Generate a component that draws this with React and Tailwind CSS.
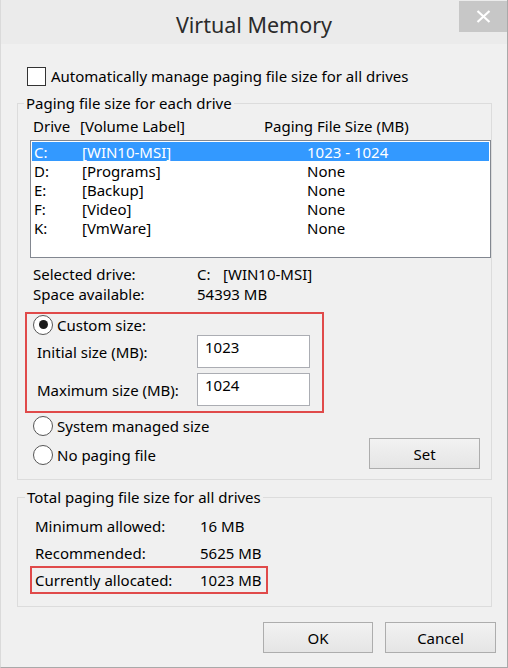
import { useState } from "react";

const drives = [
  { letter: "C:", label: "[WIN10-MSI]", size: "1023 - 1024" },
  { letter: "D:", label: "[Programs]", size: "None" },
  { letter: "E:", label: "[Backup]", size: "None" },
  { letter: "F:", label: "[Video]", size: "None" },
  { letter: "K:", label: "[VmWare]", size: "None" },
];

const Radio = ({ checked, onClick, children }) => (
  <div className="flex items-center h-[22px] cursor-default" onClick={onClick}>
    <span className="w-[20px] h-[20px] rounded-full border border-[#555] bg-white flex items-center justify-center">
      {checked && <span className="w-[9px] h-[9px] rounded-full bg-[#1a1a1a]" />}
    </span>
    <span className="ml-[4px]">{children}</span>
  </div>
);

const Button = ({ className = "", children }) => (
  <button className={`h-[31px] border border-[#adadad] bg-gradient-to-b from-[#f2f2f2] to-[#e5e5e5] text-black ${className}`}>
    {children}
  </button>
);

export default function App() {
  const [selected, setSelected] = useState(0);
  const [mode, setMode] = useState("custom");
  const [initial, setInitial] = useState("1023");
  const [maximum, setMaximum] = useState("1024");

  return (
    <div className="w-[508px] h-[668px] bg-[#f0f0f0] border-r border-b border-l border-r-[#a9a9a9] border-b-[#a9a9a9] border-l-[#dadada] flex flex-col text-black text-[15px] leading-[20px] font-['Noto_Sans',sans-serif] select-none">
      {/* title bar */}
      <div className="relative h-[44px] bg-[#ebebeb] flex items-center justify-center pt-[5px]">
        <span className="text-[21.5px] leading-[28px] text-[#2b2b2b]">Virtual Memory</span>
        <div className="absolute right-0 top-[1px] w-[48px] h-[31px] bg-[#c7c7c7] flex items-center justify-center">
          <svg width="15" height="13" viewBox="0 0 15 13">
            <path d="M1.5 1 L13.5 12 M13.5 1 L1.5 12" stroke="white" strokeWidth="2.2" />
          </svg>
        </div>
      </div>

      {/* auto manage */}
      <div className="flex items-center mt-[22px] ml-[26px] h-[20px]">
        <span className="w-[19px] h-[19px] border border-[#333] bg-white" />
        <span className="ml-[5px]">Automatically manage paging file size for all drives</span>
      </div>

      {/* paging file size for each drive */}
      <fieldset className="ml-[16px] mt-[7px] w-[475px] border border-[#dcdcdc] pb-[10px]">
        <legend className="ml-[6px] px-[2px] leading-[20px]">Paging file size for each drive</legend>
        <div className="flex h-[19px] mt-[3px] pl-[15px] items-center">
          <span className="w-[47px]">Drive</span>
          <span className="w-[184px]">[Volume Label]</span>
          <span>Paging File Size (MB)</span>
        </div>
        <div className="ml-[12px] mt-[5px] w-[461px] h-[118px] border border-[#828790] bg-white p-[1px]">
          {drives.map((d, i) => (
            <div
              key={d.letter}
              onClick={() => setSelected(i)}
              className={`flex h-[19px] items-center pl-[2px] ${selected === i ? "bg-[#3399ff] text-white" : ""}`}
            >
              <span className="w-[48px]">{d.letter}</span>
              <span className="w-[225px]">{d.label}</span>
              <span>{d.size}</span>
            </div>
          ))}
        </div>

        <div className="mt-[6px] pl-[15px]">
          <div className="flex h-[20px] items-center">
            <span className="w-[164px]">Selected drive:</span>
            <span className="w-[26px]">{drives[selected].letter}</span>
            <span>{drives[selected].label}</span>
          </div>
          <div className="flex h-[20px] items-center">
            <span className="w-[164px]">Space available:</span>
            <span>54393 MB</span>
          </div>
        </div>

        {/* custom size (highlighted) */}
        <div className="ml-[7px] mt-[8px] w-[299px] h-[101px] border-2 border-[#e04a4a]">
          <div className="ml-[6px] h-[21px] flex items-center">
            <Radio checked={mode === "custom"} onClick={() => setMode("custom")}>Custom size:</Radio>
          </div>
          <div className="flex items-center h-[33px] pl-[10px]">
            <span className="w-[160px]">Initial size (MB):</span>
            <input
              value={initial}
              onChange={(e) => setInitial(e.target.value)}
              className="w-[113px] h-[33px] border border-[#abadb3] bg-white pl-[7px] pb-[9px] outline-none"
            />
          </div>
          <div className="flex items-center h-[33px] mt-[5px] pl-[10px]">
            <span className="w-[160px]">Maximum size (MB):</span>
            <input
              value={maximum}
              onChange={(e) => setMaximum(e.target.value)}
              className="w-[113px] h-[33px] border border-[#abadb3] bg-white pl-[7px] pb-[9px] outline-none"
            />
          </div>
        </div>

        <div className="flex mt-[2px]">
          <div className="ml-[15px] flex flex-col gap-[7px]">
            <Radio checked={mode === "system"} onClick={() => setMode("system")}>System managed size</Radio>
            <Radio checked={mode === "none"} onClick={() => setMode("none")}>No paging file</Radio>
          </div>
          <Button className="ml-auto mr-[11px] mt-[23px] w-[111px] h-[30px]">Set</Button>
        </div>
      </fieldset>

      {/* totals */}
      <fieldset className="ml-[16px] mt-[7px] w-[475px] border border-[#dcdcdc] pb-[12px]">
        <legend className="ml-[7px] px-[2px] leading-[20px]">Total paging file size for all drives</legend>
        <div className="mt-[6px] pl-[17px]">
          <div className="flex h-[26px] items-center">
            <span className="w-[165px]">Minimum allowed:</span>
            <span>16 MB</span>
          </div>
          <div className="flex h-[27px] items-center">
            <span className="w-[165px]">Recommended:</span>
            <span>5625 MB</span>
          </div>
        </div>
        <div className="ml-[12px] w-[238px] h-[28px] border-2 border-[#e04a4a] flex items-center pl-[3px]">
          <span className="w-[165px]">Currently allocated:</span>
          <span>1023 MB</span>
        </div>
      </fieldset>

      <div className="flex justify-end gap-[12px] mt-[15px] pr-[11px]">
        <Button className="w-[110px]">OK</Button>
        <Button className="w-[111px]">Cancel</Button>
      </div>
    </div>
  );
}
